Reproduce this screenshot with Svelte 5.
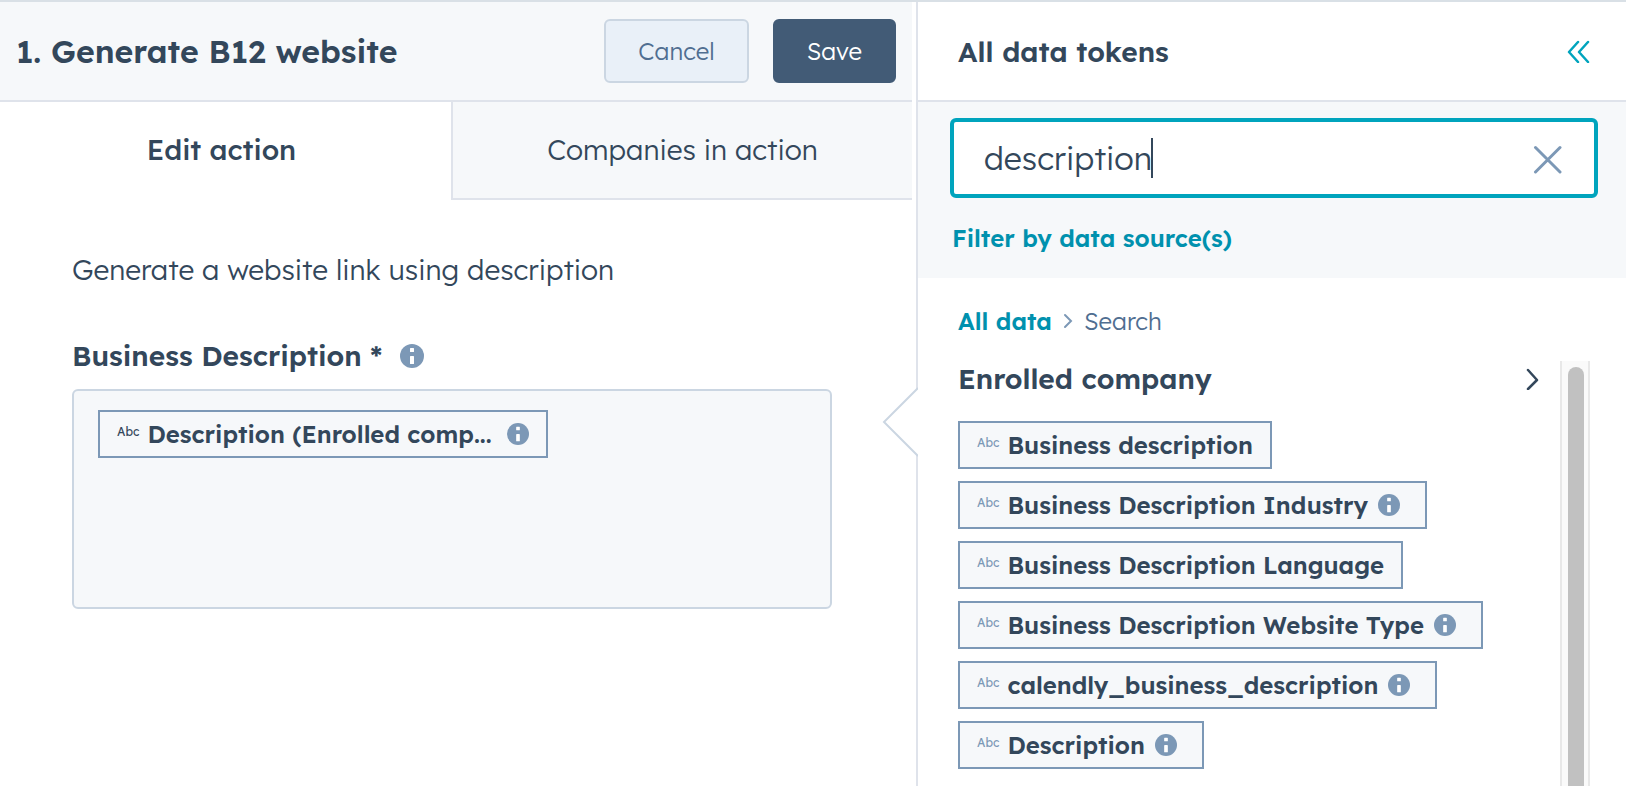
<script lang="ts">
    interface Token {
        name: string;
        info: boolean;
    }

    const tokens: Token[] = [
        { name: "Business description", info: false },
        { name: "Business Description Industry", info: true },
        { name: "Business Description Language", info: false },
        { name: "Business Description Website Type", info: true },
        { name: "calendly_business_description", info: true },
        { name: "Description", info: true },
    ];

    let query = $state("description");
    let tab = $state("edit");
</script>

{#snippet infoIcon()}
    <svg class="info" viewBox="0 0 24 24" aria-hidden="true">
        <circle cx="12" cy="12" r="12" fill="#7c98b6" />
        <rect x="10" y="4" width="4" height="4" rx="0.5" fill="#fff" />
        <rect x="10" y="12" width="4" height="8" rx="0.5" fill="#fff" />
    </svg>
{/snippet}

<div class="editor">
    <section class="action">
        <header class="action-header">
            <h1>1. Generate B12 website</h1>
            <div class="buttons">
                <button class="btn secondary">Cancel</button>
                <button class="btn primary">Save</button>
            </div>
        </header>

        <div class="tabs" role="tablist">
            <button
                role="tab"
                class:active={tab === "edit"}
                aria-selected={tab === "edit"}
                onclick={() => (tab = "edit")}>Edit action</button
            >
            <button
                role="tab"
                class:active={tab === "companies"}
                aria-selected={tab === "companies"}
                onclick={() => (tab = "companies")}>Companies in action</button
            >
        </div>

        <div class="form">
            <p>Generate a website link using description</p>
            <div class="field-label">
                <span id="field-name">Business Description *</span>
                {@render infoIcon()}
            </div>
            <div class="token-field" role="group" aria-labelledby="field-name">
                <button class="chip selected">
                    <span class="type">Abc</span>
                    <span class="name">Description (Enrolled comp...</span>
                    {@render infoIcon()}
                </button>
            </div>
        </div>
    </section>

    <aside class="tokens">
        <svg class="pointer" viewBox="0 0 36 70" aria-hidden="true">
            <path d="M36 1 L2 35 L36 69" fill="#fff" stroke="#cbd6e2" stroke-width="2" />
        </svg>

        <header class="tokens-header">
            <h2>All data tokens</h2>
            <button class="icon-btn" aria-label="Collapse">
                <svg width="24" height="24" viewBox="0 0 24 24">
                    <path
                        d="M12 3 L3 13 L12 23 M22 3 L13 13 L22 23"
                        fill="none"
                        stroke="#00a4bd"
                        stroke-width="2.500"
                        stroke-linecap="round"
                        stroke-linejoin="round"
                    />
                </svg>
            </button>
        </header>

        <div class="filters">
            <div class="search">
                <input type="text" aria-label="Search tokens" bind:value={query} />
                <span class="caret"></span>
                <button class="icon-btn clear" aria-label="Clear" onclick={() => (query = "")}>
                    <svg width="32" height="32" viewBox="0 0 32 32">
                        <path
                            d="M3.500 5.500 L28 30 M28 5.500 L3.500 30"
                            fill="none"
                            stroke="#7c98b6"
                            stroke-width="3"
                            stroke-linecap="round"
                        />
                    </svg>
                </button>
            </div>
            <button class="filter-link">Filter by data source(s)</button>
        </div>

        <nav class="breadcrumb" aria-label="Breadcrumb">
            <a href="#all">All data</a>
            <svg width="10" height="16" viewBox="0 0 10 16" aria-hidden="true">
                <path d="M2 2 L8 8 L2 14" fill="none" stroke="#7c98b6" stroke-width="2" stroke-linecap="round" />
            </svg>
            <span>Search</span>
        </nav>

        <div class="results">
            <div class="group">
                <button class="group-header">
                    <span>Enrolled company</span>
                    <svg width="14" height="24" viewBox="0 0 14 24" aria-hidden="true">
                        <path
                            d="M2 4 L11 14 L2 23"
                            fill="none"
                            stroke="#33475b"
                            stroke-width="2.500"
                            stroke-linecap="round"
                            stroke-linejoin="round"
                        />
                    </svg>
                </button>
                <ul>
                    {#each tokens as token}
                        <li>
                            <button class="chip" class:with-info={token.info}>
                                <span class="type">Abc</span>
                                <span class="name">{token.name}</span>
                                {#if token.info}
                                    {@render infoIcon()}
                                {/if}
                            </button>
                        </li>
                    {/each}
                </ul>
            </div>
            <div class="scrollbar"><div class="thumb"></div></div>
        </div>
    </aside>
</div>

<style>
    :global(body) {
        background: #fff;
        color: #33475b;
        font-family: "Lexend Deca", Inter, "Open Sans", sans-serif;
        font-size: 28px;
        font-weight: 300;
    }

    .editor,
    .editor * {
        box-sizing: border-box;
    }

    .editor {
        display: grid;
        grid-template-columns: minmax(0, 912fr) minmax(0, 710fr);
        gap: 4px;
        height: 100vh;
        overflow: hidden;
        border-top: 2px solid #d9e0e6;
    }

    button {
        margin: 0;
        padding: 0;
        border: 0;
        background: none;
        color: inherit;
        font: inherit;
        cursor: pointer;
    }
    h1,
    h2,
    p,
    ul {
        margin: 0;
        padding: 0;
    }

    .action-header,
    .tokens-header {
        display: flex;
        align-items: center;
        justify-content: space-between;
        height: 100px;
        border-bottom: 2px solid #dfe3eb;
    }
    .action-header {
        padding: 0 16px;
        background: #f6f8fa;
    }
    h1 {
        font-size: 32px;
        font-weight: 600;
    }
    h2 {
        font-size: 28px;
        font-weight: 600;
    }

    .buttons {
        display: flex;
        gap: 24px;
    }
    .btn {
        height: 64px;
        padding: 0 32px;
        border: 2px solid #425b76;
        border-radius: 6px;
        font-size: 24px;
    }
    .btn.primary {
        background: #425b76;
        color: #fff;
    }
    .btn.secondary {
        border-color: #cbd6e2;
        background: #e9f0f8;
        color: #506e91;
    }

    .tabs {
        display: grid;
        grid-template-columns: 451fr 461fr;
    }
    .tabs button {
        height: 98px;
        padding-bottom: 2px;
        border-bottom: 2px solid #dfe3eb;
        border-left: 2px solid #dfe3eb;
        background: #f6f8fa;
    }
    .tabs button.active {
        padding-right: 10px;
        border-color: #fff;
        background: #fff;
        font-weight: 500;
    }

    .form {
        padding: 50px 80px 0 72px;
    }
    .form p {
        line-height: 40px;
    }
    .field-label {
        display: flex;
        align-items: center;
        gap: 18px;
        margin-top: 46px;
        font-weight: 600;
        line-height: 40px;
    }
    .token-field {
        height: 220px;
        margin-top: 13px;
        padding: 19px 24px;
        border: 2px solid #cbd6e2;
        border-radius: 6px;
        background: #f6f8fa;
    }

    .info {
        flex: none;
        width: 24px;
        height: 24px;
    }

    .chip {
        display: flex;
        align-items: center;
        height: 48px;
        padding: 0 17px;
        border: 2px solid #7c98b6;
        background: #f6f8fa;
        font-size: 24px;
        font-weight: 600;
        white-space: nowrap;
    }
    .chip .type {
        margin-right: 8px;
        padding-bottom: 6px;
        color: #7c98b6;
        font-size: 12px;
        font-weight: 400;
    }
    .chip .info {
        width: 22px;
        height: 22px;
        margin-left: 10px;
    }
    .chip.with-info {
        padding-right: 25px;
    }
    .chip.selected .type {
        color: #33475b;
    }
    .chip.selected .info {
        margin-left: 15px;
    }

    .tokens {
        position: relative;
        display: flex;
        flex-direction: column;
        min-height: 0;
        border-left: 2px solid #dfe3eb;
    }
    .pointer {
        position: absolute;
        top: 385px;
        left: -36px;
        width: 36px;
        height: 70px;
    }
    .tokens-header {
        flex: none;
        padding: 0 36px 0 40px;
    }
    .icon-btn {
        display: flex;
    }

    .filters {
        padding: 16px 28px 20px 32px;
        background: #f6f8fa;
    }
    .search {
        display: flex;
        align-items: center;
        height: 80px;
        padding: 0 30px;
        border: 4px solid #00a4bd;
        border-radius: 6px;
        background: #fff;
    }
    .search input {
        min-width: 0;
        padding: 0;
        border: 0;
        outline: 0;
        background: none;
        color: inherit;
        caret-color: transparent;
        font: inherit;
        font-size: 32px;
        field-sizing: content;
    }
    .caret {
        width: 2px;
        height: 40px;
        margin-left: -1px;
        background: #33475b;
    }
    .clear {
        margin-left: auto;
    }
    .filter-link {
        display: block;
        margin-top: 20px;
        padding: 0 2px;
        color: #0091ae;
        font-size: 24px;
        font-weight: 600;
        line-height: 40px;
    }

    .breadcrumb {
        display: flex;
        align-items: center;
        gap: 11px;
        padding: 25px 40px 0;
        color: #506e91;
        font-size: 24px;
        line-height: 36px;
    }
    .breadcrumb a {
        color: #0091ae;
        font-weight: 600;
        text-decoration: none;
    }

    .results {
        display: flex;
        flex: 1;
        gap: 20px;
        min-height: 0;
        margin-top: 22px;
        padding: 0 36px 0 40px;
    }
    .group {
        flex: 1;
        min-width: 0;
    }
    .group-header {
        display: flex;
        align-items: center;
        justify-content: space-between;
        width: 100%;
        height: 34px;
        font-weight: 600;
    }
    ul {
        display: flex;
        flex-direction: column;
        gap: 12px;
        margin-top: 26px;
        list-style: none;
    }
    li {
        display: flex;
    }

    .scrollbar {
        width: 30px;
        padding: 6px 4px 0 6px;
        border: solid #e8e8e8;
        border-width: 0 2px;
        background: #fafafa;
    }
    .thumb {
        width: 16px;
        height: 100%;
        border-radius: 8px 8px 0 0;
        background: #c1c1c1;
    }
</style>
